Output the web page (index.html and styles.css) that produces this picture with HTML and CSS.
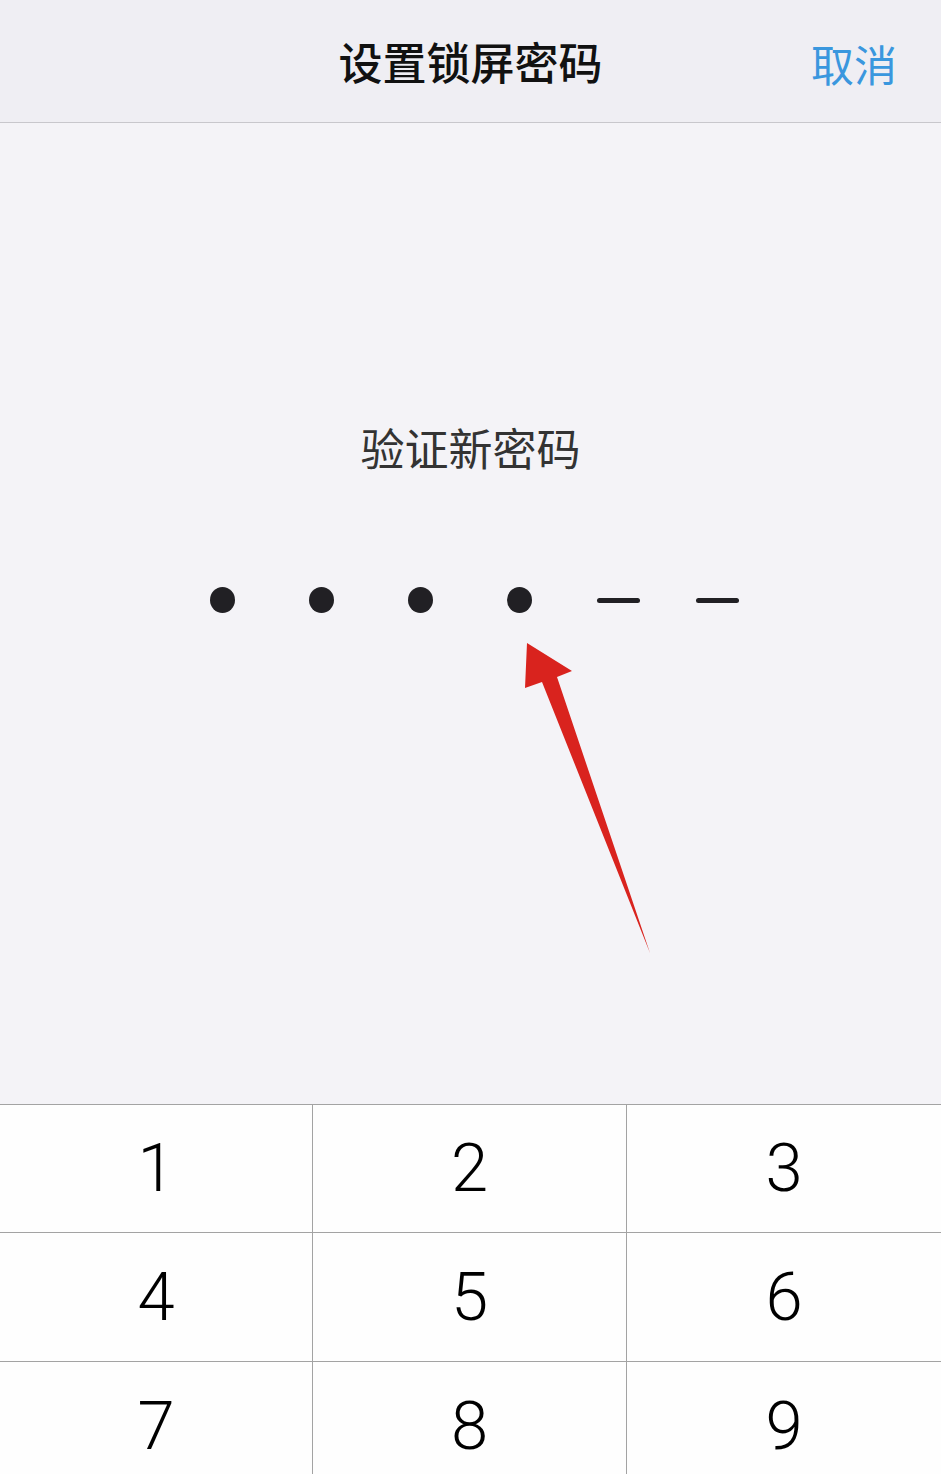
FILE: index.html
```html
<!DOCTYPE html>
<html lang="zh-CN">
<head>
<meta charset="UTF-8">
<title>设置锁屏密码</title>
<link rel="stylesheet" href="styles.css">
</head>
<body>
<section class="screen">
	<header class="header">
		<h2 class="title">设置锁屏密码</h2>
		<a href="javascript:;" class="cancel">取消</a>
	</header>
	<div class="main">
		<p class="tip">验证新密码</p>
		<ul class="code">
			<li><span class="dot"></span></li>
			<li><span class="dot"></span></li>
			<li><span class="dot"></span></li>
			<li><span class="dot"></span></li>
			<li><span class="dash"></span></li>
			<li><span class="dash"></span></li>
		</ul>
		<svg class="arrow" width="140" height="320" viewBox="520 638 140 320">
			<polygon points="527,643 572,671 557,677 650,953 542,682 525,688" fill="#d9231e"/>
		</svg>
	</div>
	<ul class="keypad">
		<li><span>1</span></li>
		<li><span>2</span></li>
		<li><span>3</span></li>
		<li><span>4</span></li>
		<li><span>5</span></li>
		<li><span>6</span></li>
		<li><span>7</span></li>
		<li><span>8</span></li>
		<li><span>9</span></li>
	</ul>
</section>
</body>
</html>
```
FILE: styles.css
```css
html,
body {
	margin: 0;
	padding: 0;
}
h2,
p {
	margin: 0;
}
ul {
	margin: 0;
	padding: 0;
	list-style: none;
}
a {
	text-decoration: none;
}
.screen {
	width: 941px;
	height: 1474px;
	overflow: hidden;
	font-family: "Noto Sans CJK SC", "Liberation Sans", sans-serif;
	background: #f4f3f7;
}
.header {
	position: relative;
	height: 122px;
	display: flex;
	align-items: center;
	justify-content: center;
	background: #efeef3;
	border-bottom: 1px solid #c8c7cc;
}
.title {
	font-size: 44px;
	line-height: 60px;
	font-weight: 500;
	color: #111;
}
.cancel {
	position: absolute;
	right: 44px;
	top: 33px;
	font-size: 43px;
	line-height: 60px;
	color: #3a97de;
}
.main {
	position: relative;
	height: 981px;
	display: flex;
	flex-direction: column;
	align-items: center;
}
.tip {
	margin-top: 294px;
	font-size: 44px;
	line-height: 60px;
	color: #333;
}
.code {
	display: flex;
	margin-top: 110px;
	margin-right: 1px;
}
.code li {
	width: 99px;
	height: 26px;
	display: flex;
	align-items: center;
	justify-content: center;
}
.dot {
	width: 25px;
	height: 26px;
	border-radius: 50%;
	background: #212024;
}
.dash {
	width: 43px;
	height: 5px;
	border-radius: 3px;
	background: #212024;
}
.arrow {
	position: absolute;
	left: 520px;
	top: 515px;
}
.keypad {
	display: grid;
	grid-template-columns: 312px 314px 315px;
	background: #fefefe;
}
.keypad li {
	height: 127px;
	display: flex;
	align-items: center;
	justify-content: center;
	border-top: 1px solid #a3a3a3;
}
.keypad li:nth-child(3n+2),
.keypad li:nth-child(3n) {
	border-left: 1px solid #a3a3a3;
}
.keypad li:nth-child(n+4) {
	height: 128px;
}
.keypad span {
	display: block;
	font: 300 67px/1 "Roboto", "Liberation Sans", sans-serif;
	color: #000;
}
```
